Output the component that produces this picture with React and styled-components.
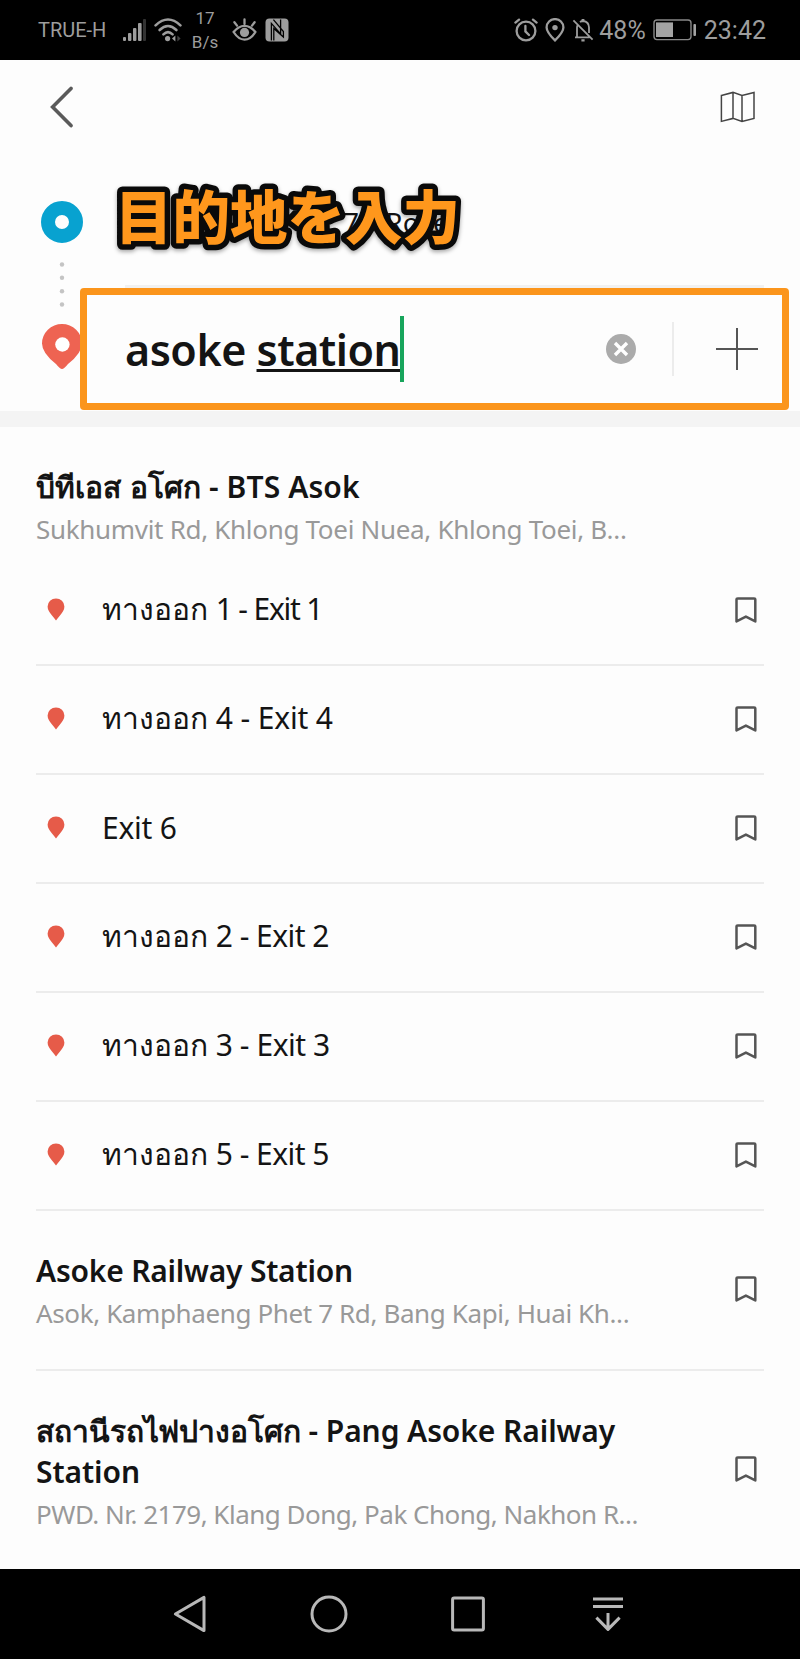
import React from "react";
import styled, { createGlobalStyle } from "styled-components";

const exits = [
  { thai: "ทางออก", name: "1 - Exit 1", gap: -1.2 },
  { thai: "ทางออก", name: "4 - Exit 4", gap: -0.15 },
  { thai: "", name: "Exit 6", gap: -0.25 },
  { thai: "ทางออก", name: "2 - Exit 2", gap: -0.55 },
  { thai: "ทางออก", name: "3 - Exit 3", gap: -0.45 },
  { thai: "ทางออก", name: "5 - Exit 5", gap: -0.55 },
];

function BookmarkIcon() {
  return (
    <svg width="22" height="26" viewBox="0 0 22 26" fill="none" stroke="#555" strokeWidth="2.5" strokeLinejoin="round">
      <path d="M1.5 2.6Q1.5 1.4 2.8 1.4H19Q20.3 1.4 20.3 2.6V24.4L10.9 19.6L1.5 24.4Z" />
    </svg>
  );
}

function StatusBar() {
  return (
    <StatusWrap>
      <Carrier>TRUE-H</Carrier>
      <SignalIcon width="25" height="24" viewBox="0 0 25 24" fill="#9d9d9d">
        <rect x="1" y="19" width="3" height="4" rx="1" />
        <rect x="6" y="15" width="3.4" height="8" rx="1" />
        <rect x="11" y="10" width="3.4" height="13" rx="1" />
        <rect x="16" y="5" width="3.6" height="18" rx="1" />
        <rect x="21" y="1" width="3" height="22" rx="1" fill="#333" />
      </SignalIcon>
      <WifiIcon width="28" height="24" viewBox="0 0 28 24" fill="none" stroke="#9d9d9d" strokeWidth="2.6" strokeLinecap="round">
        <path d="M1.6 7.4Q14 -4.4 26.4 7.4" />
        <path d="M5.6 12Q14 4 22.4 12" />
        <path d="M9.4 16.4Q14 12 18.6 16.4" />
        <circle cx="13.6" cy="20.6" r="2.6" fill="#9d9d9d" stroke="none" />
        <path d="M21.4 17.6V23.6L18 20.6Z" fill="#9d9d9d" stroke="none" />
        <path d="M23.4 17.6V23.6L26.6 20.6Z" fill="#444" stroke="none" />
      </WifiIcon>
      <Speed>
        <span>17</span>
        <span>B/s</span>
      </Speed>
      <EyeIcon width="25" height="24" viewBox="0 0 25 24" fill="none" stroke="#9d9d9d" strokeWidth="2.3" strokeLinecap="round">
        <path d="M1.6 14Q6.5 7.8 12.5 7.8T23.4 14Q18.5 21.6 12.5 21.6T1.6 14Z" />
        <circle cx="12.5" cy="14.4" r="4.6" fill="#9d9d9d" stroke="none" />
        <path d="M12.5 1.4V6M2.4 4.2L5 7.6M22.6 4.2L20 7.6" />
      </EyeIcon>
      <svg width="24" height="24" viewBox="0 0 24 24">
        <rect x="0.5" y="0.5" width="23" height="23" rx="4" fill="#9d9d9d" />
        <path d="M6.4 22.4V5.4L15.6 16V1.6M8.4 1.6L18.4 13.6V19L8.8 10.4V22.4" fill="none" stroke="#000" strokeWidth="1.3" />
      </svg>
      <StatusRight>
        <svg width="24" height="24" viewBox="0 0 24 24" fill="none" stroke="#9d9d9d" strokeWidth="2.3" strokeLinecap="round">
          <circle cx="12" cy="13" r="9.4" />
          <path d="M1.4 4.6L5 1.6M22.6 4.6L19 1.6M11.4 8V13.4L15 17" />
        </svg>
        <svg width="20" height="24" viewBox="0 0 20 24" fill="none" stroke="#9d9d9d" strokeWidth="2.3">
          <path d="M10 22.4Q1.6 14 1.6 9.4A8.4 8.3 0 0 1 18.4 9.4Q18.4 14 10 22.4Z" />
          <circle cx="10" cy="9.6" r="2.7" fill="#9d9d9d" stroke="none" />
        </svg>
        <svg width="22" height="24" viewBox="0 0 22 24" fill="none" stroke="#9d9d9d" strokeWidth="1.8">
          <path d="M1.4 2.4L20.6 21.6M3 19.4H17.6M5 19V9.6Q5 8 5.8 6.6M8 4Q9.4 3 11 3Q17 3.6 17 9.6V15" />
          <path d="M9.6 2H12.4M9.4 22.4H12.6" strokeWidth="2.2" />
        </svg>
        <Battery>48%</Battery>
        <svg width="44" height="22" viewBox="0 0 44 22" fill="none" stroke="#888">
          <rect x="1" y="1" width="37" height="19.6" rx="3" strokeWidth="1.4" />
          <rect x="3" y="3.4" width="17" height="14.6" fill="#a3a3a3" stroke="none" />
          <rect x="40.4" y="5" width="2.6" height="12" rx="1" fill="#a3a3a3" stroke="none" />
        </svg>
        <Clock>23:42</Clock>
      </StatusRight>
    </StatusWrap>
  );
}

function RouteForm() {
  return (
    <FormWrap>
      <TopBar>
        <svg width="24" height="42" viewBox="0 0 24 42" fill="none" stroke="#5a5a5a" strokeWidth="3.6" strokeLinecap="round">
          <path d="M21 2.4L2.6 21L21 39.6" />
        </svg>
        <svg width="36" height="32" viewBox="0 0 36 32" fill="none" stroke="#444" strokeWidth="1.5">
          <path d="M1.4 4.4L13 1.4L22 4.4L34 1.4V27.4L22 30.4L13 27.4L1.4 30.4ZM13 1.4V27.4M22 4.4V30.4" />
        </svg>
      </TopBar>
      <Fields>
        <Rail width="42" height="170" viewBox="0 0 42 170">
          <circle cx="21" cy="21" r="14" fill="none" stroke="#08a2d0" strokeWidth="14" />
          <g fill="#c4c4c4">
            <circle cx="21" cy="63.5" r="2.2" />
            <circle cx="21" cy="76.8" r="2.2" />
            <circle cx="21" cy="90.2" r="2.2" />
            <circle cx="21" cy="103.5" r="2.2" />
          </g>
          <path d="M21 168Q19 168 15 163Q1 152 1 142.5A20 19.6 0 0 1 41 142.5Q41 152 27 163Q23 168 21 168Z" fill="#ee6352" />
          <circle cx="21.4" cy="143.5" r="7.2" fill="#fff" />
        </Rail>
        <Inputs>
          <Origin>
            <OriginValue>7 Rose</OriginValue>
            <Caption width="380" height="110" viewBox="0 0 380 110">
              <text x="16" y="75">
                目的地を入力
              </text>
            </Caption>
          </Origin>
          <Destination>
            <Query>
              asoke <u>station</u>
            </Query>
            <Caret />
            <ClearIcon width="30" height="30" viewBox="0 0 30 30">
              <circle cx="15" cy="15" r="15" fill="#ababab" />
              <path d="M9 9L21 21M21 9L9 21" stroke="#fff" strokeWidth="3.4" />
            </ClearIcon>
            <Separator />
            <svg width="42" height="42" viewBox="0 0 42 42" stroke="#555" strokeWidth="2">
              <path d="M21 0V42M0 21H42" />
            </svg>
          </Destination>
        </Inputs>
      </Fields>
    </FormWrap>
  );
}

function App() {
  return (
    <Screen>
      <GlobalStyle />
      <StatusBar />
      <RouteForm />
      <Results>
        <GroupHeader>
          <Title $gap={0.12}>บีทีเอส อโศก - BTS Asok</Title>
          <Address $gap={-0.31}>Sukhumvit Rd, Khlong Toei Nuea, Khlong Toei, B...</Address>
        </GroupHeader>
        {exits.map((exit) => (
          <ExitRow key={exit.name}>
            <svg width="18" height="23" viewBox="0 0 18 23">
              <path d="M9 22.6Q7.6 20.4 5 17.4Q0.6 12.6 0.6 8.6A8.4 8.2 0 0 1 17.4 8.6Q17.4 12.6 13 17.4Q10.4 20.4 9 22.6Z" fill="#e65b49" />
            </svg>
            <ExitName $gap={exit.gap}>
              {exit.thai} <span>{exit.name}</span>
            </ExitName>
            <BookmarkIcon />
          </ExitRow>
        ))}
        <Place $height={160}>
          <PlaceInfo>
            <Title $gap={-0.22}>Asoke Railway Station</Title>
            <Address $gap={-0.38}>Asok, Kamphaeng Phet 7 Rd, Bang Kapi, Huai Kh...</Address>
          </PlaceInfo>
          <BookmarkIcon />
        </Place>
        <Place $height={198} $last>
          <PlaceInfo>
            <Title $gap={-0.08}>
              สถานีรถไฟปางอโศก - Pang Asoke Railway
              <br />
              Station
            </Title>
            <Address $gap={-0.5}>PWD. Nr. 2179, Klang Dong, Pak Chong, Nakhon R...</Address>
          </PlaceInfo>
          <BookmarkIcon />
        </Place>
      </Results>
      <NavBar>
        <svg width="34" height="38" viewBox="0 0 34 38">
          <path d="M2.4 19L31 2.4V35.6Z" />
        </svg>
        <svg width="38" height="38" viewBox="0 0 38 38">
          <circle cx="19" cy="19" r="17" />
        </svg>
        <svg width="34" height="36" viewBox="0 0 34 36">
          <rect x="1.6" y="2" width="30.8" height="32" rx="1.5" />
        </svg>
        <HideIcon width="30" height="36" viewBox="0 0 30 36">
          <path d="M0 3H30M0 10.6H30M15 17V33M3.4 21.6L15 33.4L26.6 21.6" />
        </HideIcon>
      </NavBar>
    </Screen>
  );
}

export default App;

const GlobalStyle = createGlobalStyle`
  * {
    box-sizing: border-box;
  }

  body {
    margin: 0;
    background: #fdfdfd;
  }

  svg {
    display: block;
    flex-shrink: 0;
  }
`;

const Screen = styled.div`
  display: flex;
  flex-direction: column;
  width: 800px;
  height: 1659px;
  overflow: hidden;
  background: #fdfdfd;
  color: #141414;
  font-family: "Noto Sans", "Open Sans", sans-serif;
`;

const StatusWrap = styled.div`
  display: flex;
  align-items: center;
  height: 60px;
  padding: 0 34px 0 38px;
  background: #000;
  color: #9d9d9d;
  font-family: Roboto, sans-serif;
  white-space: nowrap;
`;

const Carrier = styled.span`
  width: 68px;
  font-size: 20px;
`;

const SignalIcon = styled.svg`
  margin-left: 16px;
`;

const WifiIcon = styled.svg`
  margin-left: 7px;
`;

const Speed = styled.div`
  display: flex;
  flex-direction: column;
  align-items: center;
  width: 26px;
  margin-left: 10px;
  font-size: 17px;
  line-height: 24px;
`;

const EyeIcon = styled.svg`
  margin: 0 8px 0 14px;
`;

const StatusRight = styled.div`
  display: flex;
  align-items: center;
  gap: 7px;
  margin-left: auto;
`;

const Battery = styled.span`
  margin-left: -2px;
  font-size: 25px;
`;

const Clock = styled.span`
  font-size: 25px;
`;

const FormWrap = styled.div`
  display: flex;
  flex-direction: column;
  height: 367px;
  border-bottom: 16px solid #f4f4f4;
`;

const TopBar = styled.div`
  display: flex;
  align-items: center;
  justify-content: space-between;
  height: 93px;
  padding: 0 44px 0 50px;
`;

const Fields = styled.div`
  display: flex;
  flex: 1;
  padding: 0 11px 0 41px;
`;

const Rail = styled.svg`
  margin: 48px -3px 0 0;
`;

const Inputs = styled.div`
  z-index: 1;
  display: flex;
  flex: 1;
  flex-direction: column;
`;

const Origin = styled.div`
  position: relative;
  height: 135px;
  padding: 49px 0 0 45px;
  margin: 0 25px 0 0;
  background: linear-gradient(#f1f1f1, #f1f1f1) 45px 132px / 100% 3px no-repeat;
`;

const OriginValue = styled.div`
  padding-left: 218px;
  font-size: 28px;
  line-height: 40px;
  word-spacing: 19px;
  white-space: nowrap;
`;

// annotation drawn over the origin field
const Caption = styled.svg`
  position: absolute;
  top: 11px;
  left: 19px;
  filter: drop-shadow(0 2px 2px rgba(0, 0, 0, 0.35));

  text {
    fill: #ff971c;
    stroke: #0a0a0a;
    stroke-width: 11px;
    stroke-linejoin: round;
    paint-order: stroke fill;
    font-family: "Noto Sans CJK JP", sans-serif;
    font-size: 57.5px;
    font-weight: 900;
  }
`;

const Destination = styled.div`
  display: flex;
  align-items: center;
  height: 122px;
  padding: 0 24px 0 38px;
  border: 7px solid #fb951c;
  border-radius: 4px;
  background: #fdfdfd;
`;

const Query = styled.span`
  font-size: 43px;
  font-weight: 600;
  letter-spacing: -0.5px;
  white-space: nowrap;

  u {
    text-decoration-thickness: 3px;
    text-underline-offset: 3px;
    text-decoration-skip-ink: none;
  }
`;

const Caret = styled.span`
  width: 4px;
  height: 66px;
  background: #18a55c;
`;

const ClearIcon = styled.svg`
  margin-left: auto;
`;

const Separator = styled.span`
  width: 2px;
  height: 54px;
  margin: 0 42px 0 36px;
  background: #ececec;
`;

const Results = styled.div`
  display: flex;
  flex-direction: column;
  height: 1142px;
  padding: 0 36px;
`;

const GroupHeader = styled.div`
  height: 130px;
  padding-top: 39px;
`;

const Title = styled.div`
  font-size: 30px;
  font-weight: 600;
  letter-spacing: ${({ $gap }) => $gap}px;
  line-height: 41px;
  white-space: nowrap;
`;

const Address = styled.div`
  color: #999;
  font-size: 26px;
  letter-spacing: ${({ $gap }) => $gap}px;
  line-height: 45px;
  white-space: nowrap;
`;

const ExitRow = styled.div`
  display: flex;
  align-items: center;
  height: 109px;
  padding: 0 7px 2px 11px;
  border-bottom: 2px solid #ececec;
`;

const ExitName = styled.span`
  flex: 1;
  margin-left: 37px;
  font-size: 30px;

  span {
    letter-spacing: ${({ $gap }) => $gap}px;
  }
`;

const Place = styled.div`
  display: flex;
  align-items: center;
  height: ${({ $height }) => $height}px;
  padding: 0 7px 2px 0;
  border-bottom: ${({ $last }) => ($last ? "none" : "2px solid #ececec")};
`;

const PlaceInfo = styled.div`
  flex: 1;
  padding-top: 8px;
`;

const NavBar = styled.div`
  display: flex;
  flex: 1;
  align-items: center;
  gap: 103px;
  padding-left: 173px;
  background: #000;

  svg {
    fill: none;
    stroke: #b8b8b8;
    stroke-width: 3;
    stroke-linejoin: round;
  }
`;

const HideIcon = styled.svg`
  margin-left: 5px;
`;
